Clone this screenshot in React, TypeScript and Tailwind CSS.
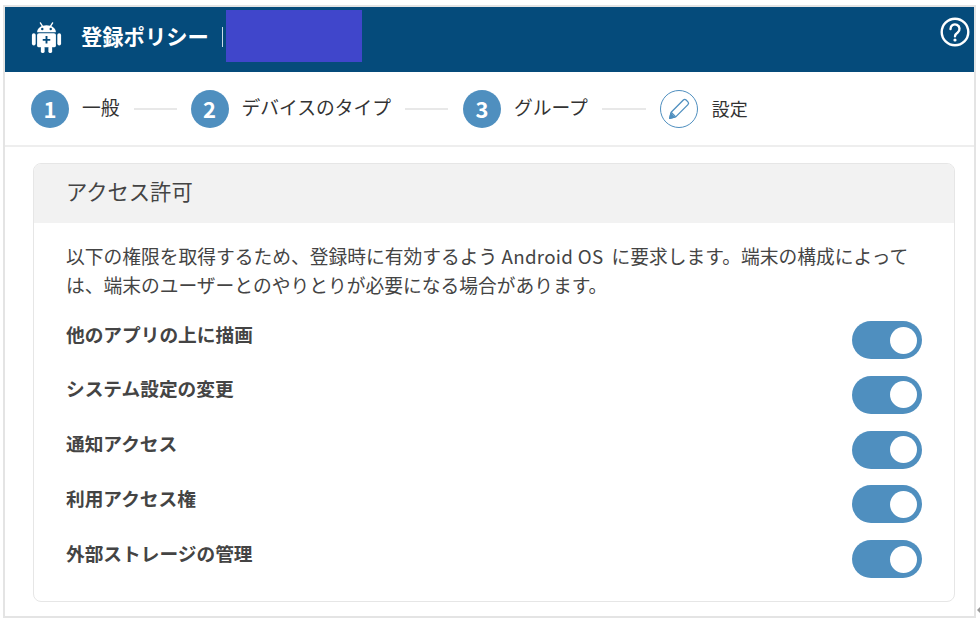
const font = 'font-["Noto_Sans_CJK_JP","Liberation_Sans",sans-serif]'

const steps = [
  { num: '1', label: '一般', wrap: 'flex items-center', line: 'w-[43px]' },
  { num: '2', label: 'デバイスのタイプ', wrap: 'flex items-center', line: 'w-[43px]' },
  { num: '3', label: 'グループ', wrap: 'flex items-center ml-[1px]', line: 'w-[44px]' },
]

const permissions = [
  '他のアプリの上に描画',
  'システム設定の変更',
  '通知アクセス',
  '利用アクセス権',
  '外部ストレージの管理',
]

function AndroidIcon() {
  return (
    <svg width="31" height="32" viewBox="0 0 32 34" className="shrink-0 -mt-[5px]">
      <path d="M9.500 2l2.500 4M22.500 2l-2.500 4" stroke="#fff" strokeWidth="1.400" strokeLinecap="round" />
      <path d="M6 12c0-4.500 4.500-7.500 10-7.500S26 7.500 26 12z" fill="#fff" />
      <circle cx="11.500" cy="8.500" r="1.300" fill="#054b7b" />
      <circle cx="20.500" cy="8.500" r="1.300" fill="#054b7b" />
      <rect x="6" y="13" width="20" height="15" rx="2" fill="#fff" />
      <rect x="0.500" y="13" width="4" height="13" rx="2" fill="#fff" />
      <rect x="27.500" y="13" width="4" height="13" rx="2" fill="#fff" />
      <rect x="10" y="27" width="4" height="7" rx="1.500" fill="#fff" />
      <rect x="18" y="27" width="4" height="7" rx="1.500" fill="#fff" />
      <path d="M16 16v8M12 20h8" stroke="#054b7b" strokeWidth="2" />
    </svg>
  )
}

function PenIcon() {
  return (
    <svg width="24" height="24" viewBox="0 0 22 22" fill="none" stroke="#4f8fbf" strokeWidth="1.200" strokeLinejoin="round">
      <path d="M2.500 19.500l1.300-5.500L15 2.800a1.800 1.800 0 0 1 2.500 0l1.700 1.700a1.800 1.800 0 0 1 0 2.500L8 18.200z" />
      <path d="M3.800 14l4.200 4.200" />
      <path d="M2.500 19.500l1-4.200 3.200 3.200z" fill="#4f8fbf" />
    </svg>
  )
}

function Toggle() {
  return (
    <div className="w-[70px] h-[38px] rounded-full bg-[#4f8fbf] flex items-center justify-end pr-[5px] shrink-0">
      <div className="w-[27px] h-[27px] rounded-full bg-white" />
    </div>
  )
}

export default function App() {
  return (
    <div className={`relative w-[980px] h-[622px] bg-white pt-[5px] pl-[3px] pr-[4px] pb-[4px] ${font}`}>
      <div className="h-full border-2 border-[#e4e4e4] flex flex-col">
        <header className="h-[65px] bg-[#054b7b] flex items-center pl-[26px] pr-[4px] shrink-0">
          <AndroidIcon />
          <span className="ml-[19px] text-[21.3px] font-bold text-white leading-none -mt-[8px]">登録ポリシー</span>
          <div className="ml-[13px] w-px h-[20px] bg-white/80 -mt-[5px]" />
          <div className="ml-[3px] w-[136px] h-[52px] bg-[#4046cb] self-start mt-[3px]" />
          <div className="ml-auto self-start mt-[10px] w-[30px] h-[30px] flex items-center justify-center">
            <svg width="30" height="30" viewBox="0 0 30 30" fill="none" stroke="#fff" strokeWidth="2.400">
              <circle cx="15" cy="15" r="13.300" />
              <path d="M10.500 12a4.500 4.500 0 1 1 7.200 3.500c-1.700 1.200-2.700 2-2.700 3.800" strokeLinecap="round" />
              <circle cx="15" cy="23" r="1.600" fill="#fff" stroke="none" />
            </svg>
          </div>
        </header>

        <div className="h-[75px] border-b-2 border-[#eeeeee] flex items-center pl-[26px] pt-[1px] shrink-0">
          {steps.map((step) => (
            <div key={step.num} className={step.wrap}>
              <div className="w-[38px] h-[38px] pb-[2px] rounded-full bg-[#4f8fbf] flex items-center justify-center text-white text-[22px] font-bold">
                {step.num}
              </div>
              <span className="ml-[13px] text-[18.75px] leading-none text-[#333] -mt-[3px]">{step.label}</span>
              <div className={`h-[2px] bg-[#e8e8e8] mx-[14px] ${step.line}`} />
            </div>
          ))}
          <div className="w-[38px] h-[38px] rounded-full border border-[#4f8fbf] flex items-center justify-center">
            <PenIcon />
          </div>
          <span className="ml-[14px] text-[18px] leading-none text-[#333] -mt-[3px]">設定</span>
        </div>

        <div className="flex-1 pl-[28px] pr-[19px] pt-[16px] pb-[14px]">
          <section className="h-full border border-[#e6e6e6] rounded-[8px] overflow-hidden">
            <div className="h-[59px] bg-[#f2f2f2] flex items-center pl-[32px]">
              <h2 className="text-[21.3px] font-normal text-[#444] leading-none -mt-[6px]">アクセス許可</h2>
            </div>
            <div className="pl-[32px] pr-[32px] pt-[18px]">
              <p className="text-[18.75px] leading-[29px] text-[#444]">
                以下の権限を取得するため、登録時に有効するよう <span className="tracking-[0.3px] mr-[4px]">Android OS</span> に要求します。端末の構成によっては、端末のユーザーとのやりとりが必要になる場合があります。
              </p>
              <div className="mt-[22px] flex flex-col gap-[16.75px]">
                {permissions.map((name) => (
                  <div key={name} className="flex items-center justify-between h-[38px]">
                    <span className="text-[18.7px] font-bold text-[#444] leading-none -mt-[12px]">{name}</span>
                    <Toggle />
                  </div>
                ))}
              </div>
            </div>
          </section>
        </div>
      </div>
      <div className="absolute left-[977px] top-[607px] w-0 h-0 border-y-[3px] border-y-transparent border-r-[3px] border-r-[#999]" />
    </div>
  )
}
